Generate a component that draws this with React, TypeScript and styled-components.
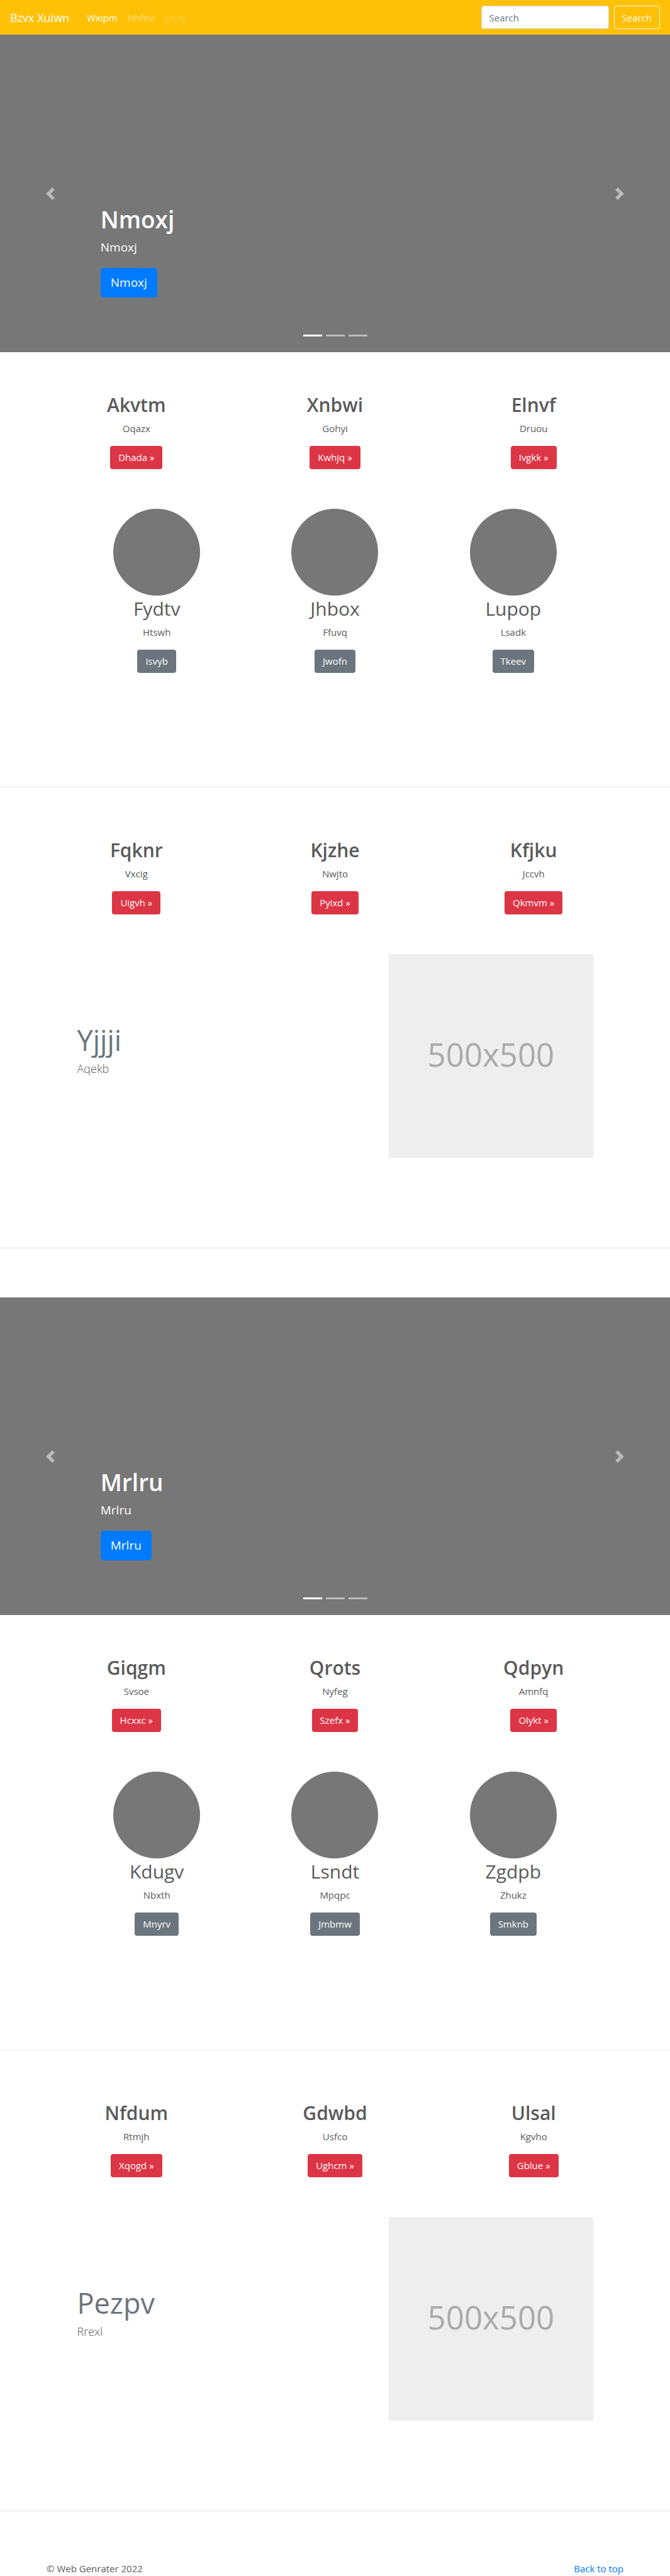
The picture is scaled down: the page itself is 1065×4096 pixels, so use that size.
import React from "react";
import styled, { createGlobalStyle } from "styled-components";

const GlobalStyle = createGlobalStyle`
  *, *::before, *::after { box-sizing: border-box; }
  body {
    margin: 0;
    background: #fff;
    color: #5a5a5a;
    font-family: "Open Sans", "Noto Sans", sans-serif;
    font-size: 15px;
    line-height: 24px;
  }
  h1, h2, p { margin: 0; }
  a { text-decoration: none; }
`;

const Navbar = styled.nav`
  display: flex;
  align-items: center;
  height: 55px;
  padding: 0 16px;
  background: #ffc107;
`;

const Brand = styled.a`
  margin-right: 20px;
  color: #fff;
  font-size: 18px;
  line-height: 30px;
`;

const NavLinks = styled.div`
  display: flex;
  flex: 1;
`;

const NavLink = styled.a<{ $alpha: number }>`
  padding: 0 8px;
  color: rgba(255, 255, 255, ${(p) => p.$alpha});
`;

const SearchForm = styled.form`
  display: flex;
  gap: 8px;
`;

const SearchInput = styled.input`
  width: 203px;
  height: 37px;
  padding: 0 12px;
  border: 1px solid #ced4da;
  border-radius: 4px;
  background: #fff;
  color: #495057;
  font: inherit;
  &::placeholder { color: #6c757d; opacity: 1; }
`;

const SearchButton = styled.button`
  height: 37px;
  padding: 0 12px;
  border: 1px solid #f8f9fa;
  border-radius: 4px;
  background: transparent;
  color: #f8f9fa;
  font: inherit;
`;

const Hero = styled.section`
  position: relative;
  display: flex;
  flex-direction: column;
  justify-content: flex-end;
  align-items: flex-start;
  height: 505px;
  padding: 0 15% 87px;
  margin-bottom: 63px;
  background: #777;
  color: #fff;
`;

const HeroTitle = styled.h1`
  margin-bottom: 8px;
  font-size: 37px;
  font-weight: 600;
  line-height: 47px;
`;

const HeroText = styled.p`
  margin-bottom: 20px;
  font-size: 19px;
  line-height: 26px;
`;

const HeroButton = styled.a`
  padding: 0 16px;
  border-radius: 5px;
  background: #007bff;
  color: #fff;
  font-size: 19px;
  line-height: 47px;
`;

const Control = styled.button<{ $side: "left" | "right" }>`
  position: absolute;
  top: 0;
  bottom: 0;
  ${(p) => p.$side}: 0;
  display: flex;
  align-items: center;
  justify-content: center;
  width: 15%;
  padding: 0;
  border: 0;
  background: none;
  opacity: 0.5;
`;

const Indicators = styled.div`
  position: absolute;
  right: 0;
  bottom: 25px;
  left: 0;
  display: flex;
  justify-content: center;
  gap: 6px;
`;

const Indicator = styled.button<{ $active: boolean }>`
  width: 30px;
  height: 3px;
  padding: 0;
  border: 0;
  background: #fff;
  opacity: ${(p) => (p.$active ? 1 : 0.5)};
`;

const Columns = styled.div<{ $narrow?: boolean }>`
  display: grid;
  grid-template-columns: repeat(3, 1fr);
  width: 100%;
  max-width: ${(p) => (p.$narrow ? 850 : 947)}px;
  margin: 0 auto ${(p) => (p.$narrow ? 181 : 63)}px;
`;

const Column = styled.div`
  display: flex;
  flex-direction: column;
  align-items: center;
  text-align: center;
`;

const Circle = styled.div`
  width: 138px;
  height: 138px;
  border-radius: 50%;
  background: #777;
`;

const ColumnTitle = styled.h2<{ $strong?: boolean }>`
  margin-bottom: 4px;
  font-size: 30px;
  font-weight: ${(p) => (p.$strong ? 600 : 400)};
  line-height: 42px;
`;

const ColumnText = styled.p`
  margin-bottom: 16px;
`;

const Button = styled.a<{ $tone: "danger" | "secondary" }>`
  padding: 0 13px;
  border-radius: 4px;
  background: ${(p) => (p.$tone === "danger" ? "#dc3545" : "#6c757d")};
  color: #fff;
  line-height: 37px;
`;

const Divider = styled.hr<{ $gap: number }>`
  height: 1px;
  margin: 0 0 ${(p) => p.$gap}px;
  border: 0;
  background: #e5e5e5;
`;

const Featurette = styled.div`
  display: grid;
  grid-template-columns: 7fr 5fr;
  align-items: center;
  width: 100%;
  max-width: 850px;
  margin: 0 auto 143px;
`;

const FeatureCell = styled.div`
  padding: 0 15px;
`;

const FeatureTitle = styled.h2`
  color: #6c757d;
  font-size: 45px;
  font-weight: 400;
  line-height: 60px;
`;

const FeatureText = styled.p`
  margin-bottom: 20px;
  font-size: 18px;
  font-weight: 300;
  line-height: 30px;
`;

const Placeholder = styled.div`
  display: flex;
  align-items: center;
  justify-content: center;
  aspect-ratio: 1;
  padding-bottom: 6px;
  background: #eee;
  color: #aaa;
  font-size: 51px;
`;

const Footer = styled.footer`
  display: flex;
  justify-content: space-between;
  width: 100%;
  max-width: 947px;
  margin: 0 auto;
  padding: 0 15px;
`;

const FooterLink = styled.a`
  color: #007bff;
`;

type Item = { title: string; text: string; action: string };
type Block = {
  hero: string;
  top: Item[];
  people: Item[];
  bottom: Item[];
  feature: { title: string; text: string };
};

const item = (title: string, text: string, action: string): Item => ({ title, text, action });

const blocks: Block[] = [
  {
    hero: "Nmoxj",
    top: [item("Akvtm", "Oqazx", "Dhada"), item("Xnbwi", "Gohyi", "Kwhjq"), item("Elnvf", "Druou", "Ivgkk")],
    people: [item("Fydtv", "Htswh", "Isvyb"), item("Jhbox", "Ffuvq", "Jwofn"), item("Lupop", "Lsadk", "Tkeev")],
    bottom: [item("Fqknr", "Vxcig", "Uigvh"), item("Kjzhe", "Nwjto", "Pyixd"), item("Kfjku", "Jccvh", "Qkmvm")],
    feature: { title: "Yjjji", text: "Aqekb" },
  },
  {
    hero: "Mrlru",
    top: [item("Giqgm", "Svsoe", "Hcxxc"), item("Qrots", "Nyfeg", "Szefx"), item("Qdpyn", "Amnfq", "Olykt")],
    people: [item("Kdugv", "Nbxth", "Mnyrv"), item("Lsndt", "Mpqpc", "Jmbmw"), item("Zgdpb", "Zhukz", "Smknb")],
    bottom: [item("Nfdum", "Rtmjh", "Xqogd"), item("Gdwbd", "Usfco", "Ughcm"), item("Ulsal", "Kgvho", "Gblue")],
    feature: { title: "Pezpv", text: "Rrexl" },
  },
];

function Carousel({ label }: { label: string }) {
  return (
    <Hero>
      <HeroTitle>{label}</HeroTitle>
      <HeroText>{label}</HeroText>
      <HeroButton href="#">{label}</HeroButton>
      <Control $side="left" type="button" aria-label="Previous">
        <svg width="20" height="20" viewBox="0 0 8 8" fill="#fff">
          <path d="M5.25 0l-4 4 4 4 1.5-1.5L4.25 4l2.5-2.5L5.25 0z" />
        </svg>
      </Control>
      <Control $side="right" type="button" aria-label="Next">
        <svg width="20" height="20" viewBox="0 0 8 8" fill="#fff">
          <path d="M2.75 0l-1.5 1.5L3.75 4l-2.5 2.5L2.75 8l4-4-4-4z" />
        </svg>
      </Control>
      <Indicators>
        {[0, 1, 2].map((i) => (
          <Indicator key={i} $active={i === 0} type="button" aria-label={`Slide ${i + 1}`} />
        ))}
      </Indicators>
    </Hero>
  );
}

function PromoRow({ items }: { items: Item[] }) {
  return (
    <Columns>
      {items.map((it) => (
        <Column key={it.title}>
          <ColumnTitle $strong>{it.title}</ColumnTitle>
          <ColumnText>{it.text}</ColumnText>
          <Button $tone="danger" href="#">{it.action} »</Button>
        </Column>
      ))}
    </Columns>
  );
}

function PeopleRow({ items }: { items: Item[] }) {
  return (
    <Columns $narrow>
      {items.map((it) => (
        <Column key={it.title}>
          <Circle />
          <ColumnTitle>{it.title}</ColumnTitle>
          <ColumnText>{it.text}</ColumnText>
          <Button $tone="secondary" href="#">{it.action}</Button>
        </Column>
      ))}
    </Columns>
  );
}

export default function App() {
  return (
    <>
      <GlobalStyle />
      <Navbar>
        <Brand href="#">Bzvx Xuiwn</Brand>
        <NavLinks>
          <NavLink $alpha={1} href="#">Wxipm</NavLink>
          <NavLink $alpha={0.5} href="#">Hhfnv</NavLink>
          <NavLink $alpha={0.25} href="#">Jpvxy</NavLink>
        </NavLinks>
        <SearchForm>
          <SearchInput type="text" placeholder="Search" aria-label="Search" />
          <SearchButton type="button">Search</SearchButton>
        </SearchForm>
      </Navbar>
      <main>
        {blocks.map((b, i) => (
          <React.Fragment key={b.hero}>
            <Carousel label={b.hero} />
            <PromoRow items={b.top} />
            <PeopleRow items={b.people} />
            <Divider $gap={79} />
            <PromoRow items={b.bottom} />
            <Featurette>
              <FeatureCell>
                <FeatureTitle>{b.feature.title}</FeatureTitle>
                <FeatureText>{b.feature.text}</FeatureText>
              </FeatureCell>
              <FeatureCell>
                <Placeholder>500x500</Placeholder>
              </FeatureCell>
            </Featurette>
            <Divider $gap={i === blocks.length - 1 ? 79 : 78} />
          </React.Fragment>
        ))}
      </main>
      <Footer>
        <p>© Web Genrater 2022</p>
        <FooterLink href="#">Back to top</FooterLink>
      </Footer>
    </>
  );
}
